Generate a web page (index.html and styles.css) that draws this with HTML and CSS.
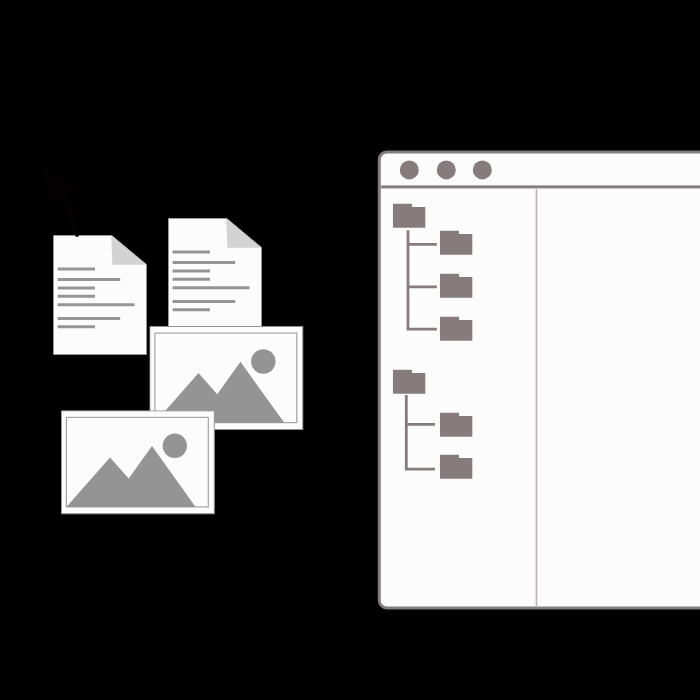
FILE: index.html
```
<!DOCTYPE html>
<html lang="en">
<head>
<meta charset="utf-8">
<title>File manager</title>
<link rel="stylesheet" href="styles.css">
</head>
<body>
<svg class="symbols" width="0" height="0" aria-hidden="true">
  <symbol id="folder" viewBox="0 0 33 25"><path d="M0 0H19.2V3.5H32.6V24.3H0Z"/></symbol>
  <symbol id="document" viewBox="0 0 95 121">
    <path class="paper" d="M.3 .3H58.5L93.5 29.5V119.5H.3Z"/>
    <path class="fold" d="M58.2 .6L59.4 29.7H93.2Z"/>
    <path class="text-lines" d="M4.6 34H42M4.6 44.4H67.2M4.6 53H42M4.6 61.3H42M4.6 69.8H81.5M4.6 83.4H67.2M4.6 91.8H42"/>
  </symbol>
  <symbol id="picture" viewBox="0 0 155 105">
    <rect class="paper" x=".3" y=".5" width="153" height="103"/>
    <rect class="frame" x="5.4" y="7.1" width="141.9" height="89.5"/>
    <path class="shape" d="M5.6 96.4L49 47.1L67.7 68.3L91 35.8L134.6 96.6H5.6Z"/>
    <circle class="shape" cx="113.8" cy="35.5" r="12.2"/>
  </symbol>
</svg>
<main class="desktop">
  <svg class="pointer" viewBox="0 0 42 76"><path d="M1 1L8 42L19 32L34 74L40 71L27 28L38 28Z"/></svg>
  <svg class="document document-front"><use href="#document"/></svg>
  <svg class="document document-back"><use href="#document"/></svg>
  <svg class="picture picture-back"><use href="#picture"/></svg>
  <svg class="picture picture-front"><use href="#picture"/></svg>
  <span class="notch"></span>
  <section class="window">
    <header class="titlebar"><i class="dot"></i><i class="dot"></i><i class="dot"></i></header>
    <div class="content">
      <nav class="sidebar">
        <div class="tree">
          <svg class="folder"><use href="#folder"/></svg>
          <div class="branch">
            <svg class="connector" viewBox="0 0 47 112"><path d="M15.2 .8V99.7H44M15.2 15H44M15.2 57.5H44"/></svg>
            <div class="children">
              <svg class="folder"><use href="#folder"/></svg>
              <svg class="folder"><use href="#folder"/></svg>
              <svg class="folder"><use href="#folder"/></svg>
            </div>
          </div>
        </div>
        <div class="tree">
          <svg class="folder"><use href="#folder"/></svg>
          <div class="branch branch-short">
            <svg class="connector" viewBox="0 0 47 112"><path d="M13.5 .7V74.7H42.2M13.5 30H42.2"/></svg>
            <div class="children">
              <svg class="folder"><use href="#folder"/></svg>
              <svg class="folder"><use href="#folder"/></svg>
            </div>
          </div>
        </div>
      </nav>
      <div class="pane"></div>
    </div>
  </section>
</main>
</body>
</html>
```

FILE: styles.css
```
* { box-sizing: border-box; }
body { margin: 0; background: #010101; }
svg { display: block; }
.symbols { position: absolute; }
.desktop { position: relative; width: 700px; height: 700px; overflow: hidden; background: #010101; }

.pointer { position: absolute; left: 40px; top: 162px; width: 42px; height: 76px; fill: #040102; }
.notch { position: absolute; left: 75px; top: 234px; width: 4px; height: 3px; border-radius: 0 0 2px 2px; background: #080304; }
.document { position: absolute; width: 95px; height: 121px; }
.document-front { left: 53px; top: 235px; }
.document-back { left: 168px; top: 218px; }
.picture { position: absolute; width: 155px; height: 105px; }
.picture-back { left: 149px; top: 326px; transform: translateX(.5px); }
.picture-front { left: 61px; top: 410px; transform: translateY(.3px); }
.paper { fill: #fcfcfc; stroke: #929292; stroke-width: 1; }
.fold { fill: #d3d3d3; }
.text-lines { fill: none; stroke: #959595; stroke-width: 3; }
.frame { fill: #fcfcfc; stroke: #a6a4a5; stroke-width: 1.2; }
.shape { fill: #949494; }

.window {
  position: absolute; left: 378px; top: 150px; width: 360px; height: 459px;
  display: flex; flex-direction: column;
  border: 3px solid #877c7d; border-radius: 9px; background: #fcfcfc; overflow: hidden;
  transform: translate(-.2px, .4px);
}
.titlebar { display: flex; gap: 17.6px; height: 34.6px; padding: 6.5px 0 0 19.2px; border-bottom: 3px solid #877c7d; }
.dot { width: 19px; height: 19px; border-radius: 50%; background: #877c7d; }
.content { display: flex; flex: 1; }
.sidebar { width: 157px; padding: 15.9px 0 0 12px; background: linear-gradient(90deg, #e6e2e3 1px, #bcb4b5 1px 2px, #e6e2e3 2px) right / 3px 100% no-repeat; }
.pane { flex: 1; }
.tree { height: 165.2px; }
.folder { width: 33px; height: 25px; fill: #877c7d; }
.branch { display: flex; margin-top: .1px; }
.connector { width: 47px; height: 112px; flex: none; fill: none; stroke: #877c7d; stroke-width: 2.8; }
.children { display: flex; flex-direction: column; gap: 18px; padding-top: 1.7px; }
.branch-short .children { gap: 17.7px; padding-top: 17.8px; }
```
